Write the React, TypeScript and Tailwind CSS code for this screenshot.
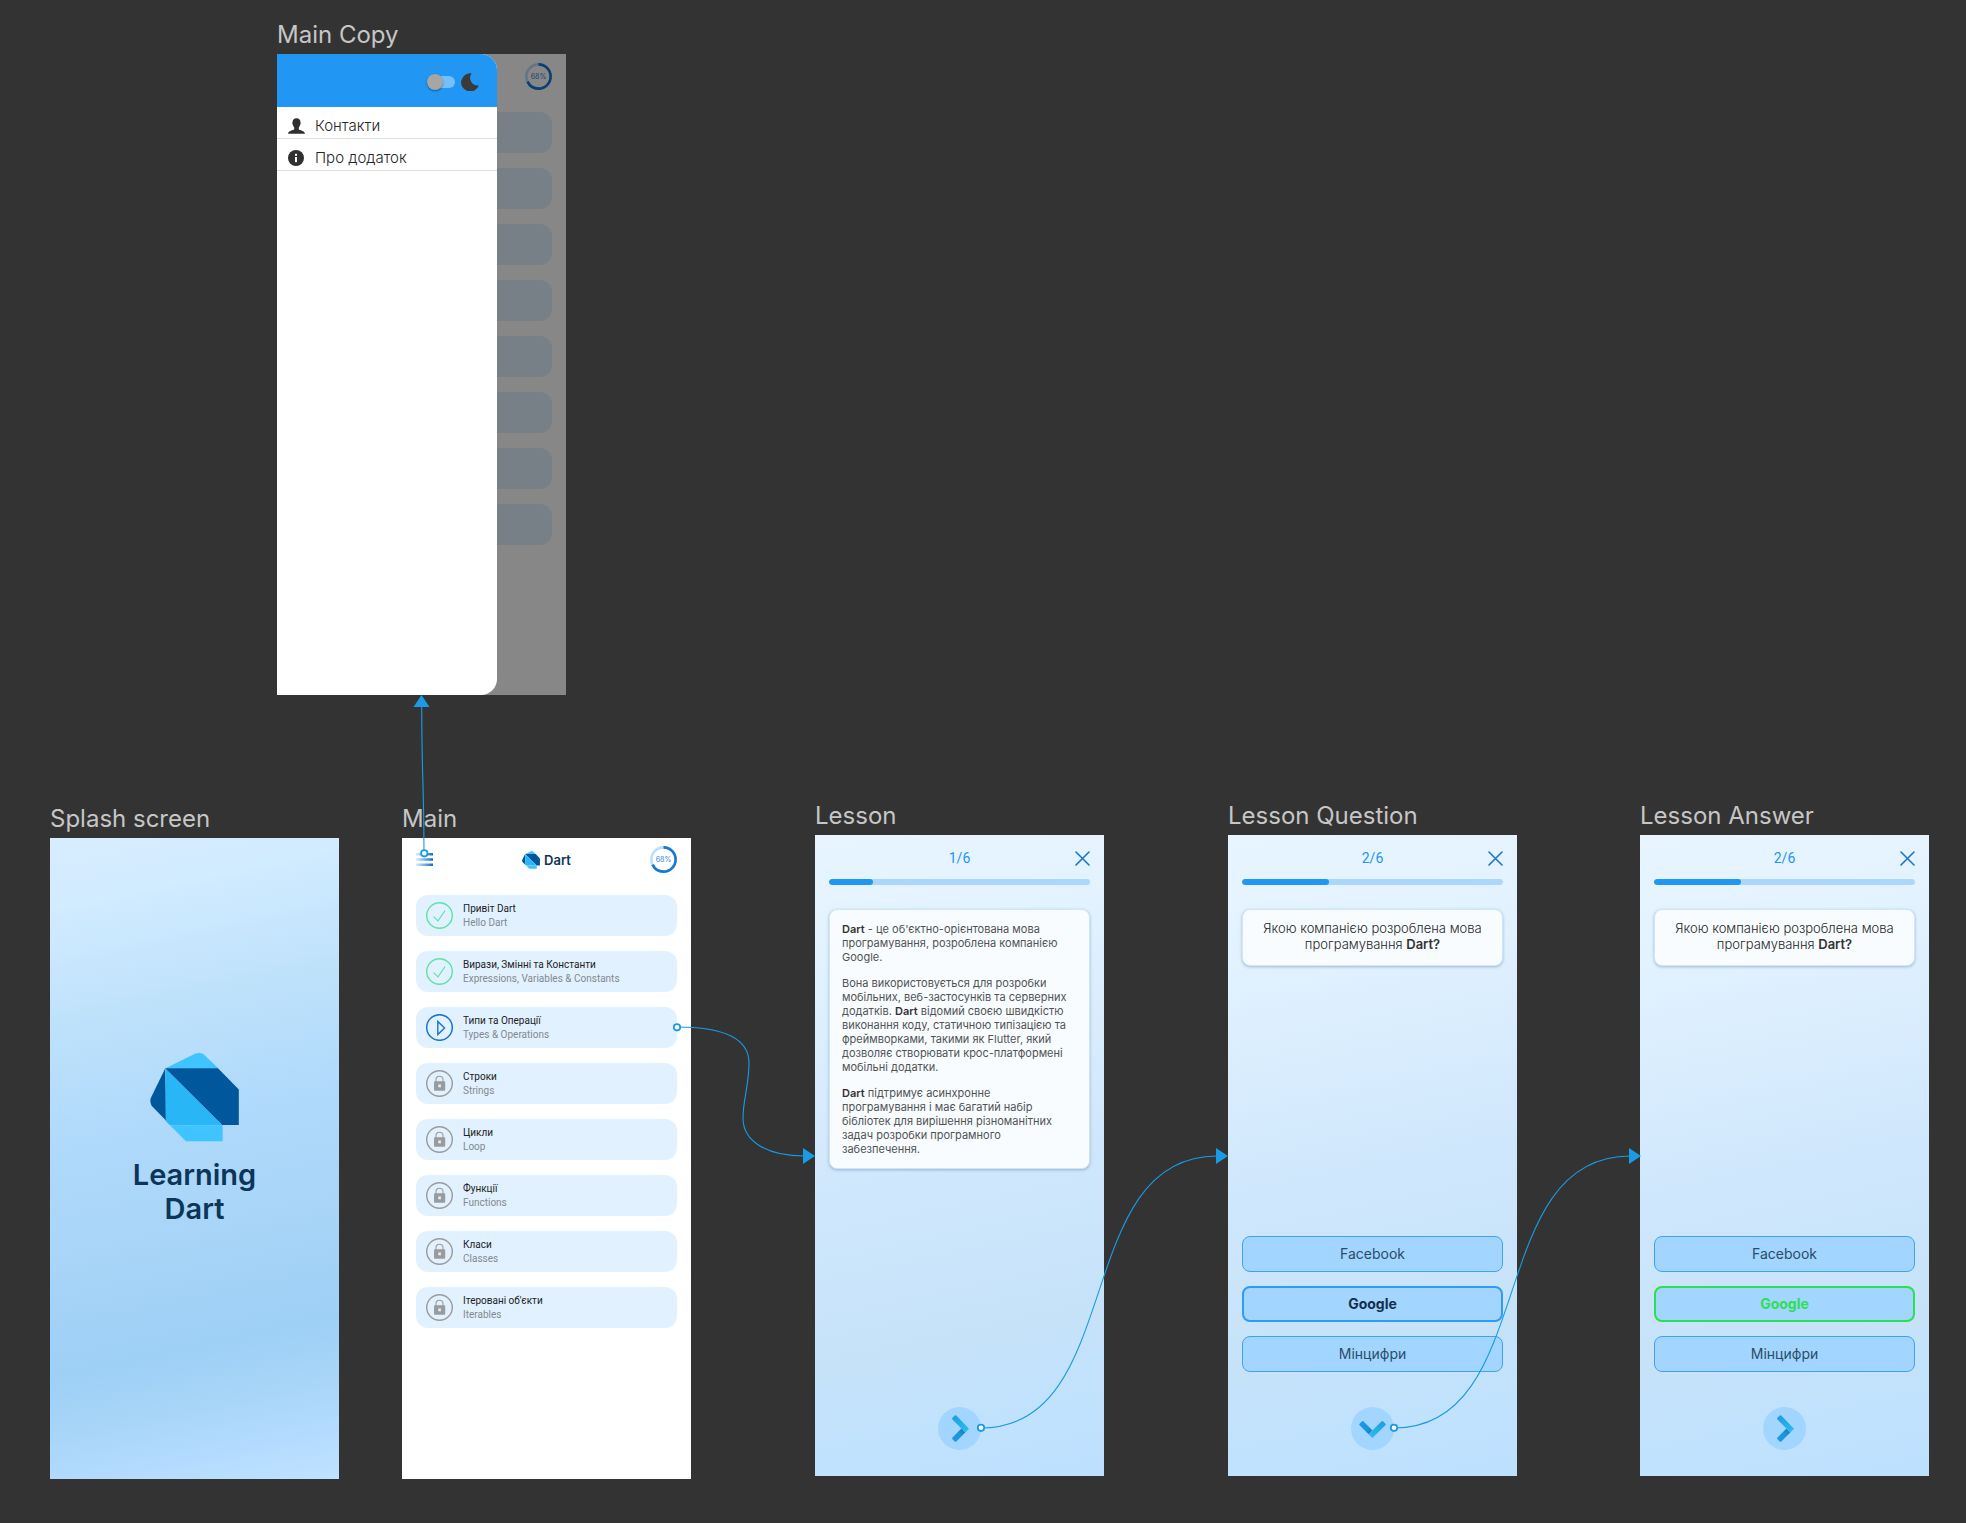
import type { ReactNode } from "react";

type Status = "done" | "current" | "locked";

const lessons: { title: string; subtitle: string; status: Status }[] = [
  { title: "Привіт Dart", subtitle: "Hello Dart", status: "done" },
  { title: "Вирази, Змінні та Константи", subtitle: "Expressions, Variables & Constants", status: "done" },
  { title: "Типи та Операції", subtitle: "Types & Operations", status: "current" },
  { title: "Строки", subtitle: "Strings", status: "locked" },
  { title: "Цикли", subtitle: "Loop", status: "locked" },
  { title: "Функції", subtitle: "Functions", status: "locked" },
  { title: "Класи", subtitle: "Classes", status: "locked" },
  { title: "Ітеровані об'єкти", subtitle: "Iterables", status: "locked" },
];

function DartLogo({ className }: { className: string }) {
  return (
    <svg viewBox="0 0 89 89" className={className} aria-hidden="true">
      <path d="M15 15.5 45 .8Q49-.6 53 .8L68.5 15.5Z" fill="#40c4ff" />
      <path d="M15.3 15.2 .8 45Q-.4 49 1.6 52.8L16 67.5Z" fill="#01579b" />
      <path d="M15 15.3H68L88.8 36.5V72H72Z" fill="#01579b" />
      <path d="M15.7 15.7 72.5 72.2H20L15.7 68Z" fill="#29b6f6" />
      <path d="M20 72.2H72.6V88.3H36Z" fill="#40c4ff" />
    </svg>
  );
}

function ProgressRing() {
  return (
    <svg viewBox="0 0 27 27" className="size-[27px]" role="img" aria-label="68%">
      <circle cx="13.5" cy="13.5" r="12.1" fill="none" stroke="#bbdefb" strokeWidth="2.6" />
      <circle
        cx="13.5"
        cy="13.5"
        r="12.1"
        fill="none"
        stroke="#1976d2"
        strokeWidth="2.6"
        pathLength="100"
        strokeDasharray="68 32"
        transform="rotate(-90 13.5 13.5)"
      />
      <text x="13.5" y="16" textAnchor="middle" fontSize="7" fill="#2f86dc">
        68%
      </text>
    </svg>
  );
}

function StatusIcon({ status }: { status: Status }) {
  return (
    <svg viewBox="0 0 27 27" className="size-[27px] shrink-0" fill="none" aria-hidden="true">
      {status === "done" && (
        <g stroke="#5ce5a0">
          <circle cx="13.5" cy="13.5" r="12.8" strokeWidth="1.4" />
          <path d="M7.6 14.6 12 18.8 19 8.6" strokeWidth="1.1" />
        </g>
      )}
      {status === "current" && (
        <g stroke="#1976d2">
          <circle cx="13.5" cy="13.5" r="12.8" strokeWidth="1.5" />
          <path d="M11.8 7.5V20.5L18.6 14Z" strokeWidth="1.4" />
        </g>
      )}
      {status === "locked" && (
        <g stroke="#9b9b9b">
          <circle cx="13.5" cy="13.5" r="12.8" strokeWidth="1.4" />
          <path d="M10 12V9.8a3.5 3.5 0 0 1 7 0v2.2" strokeWidth="1.1" />
          <path
            d="M9 11.2H18.2Q19.2 11.2 19.2 12.2V19.8Q19.2 20.8 18.2 20.8H9Q8 20.8 8 19.8V12.2Q8 11.2 9 11.2ZM12.3 14.6V17.2H14.9V14.6Z"
            fill="#9b9b9b"
            fillRule="evenodd"
            stroke="none"
          />
        </g>
      )}
    </svg>
  );
}

function Frame({ title, place, screen, children }: { title: string; place: string; screen: string; children: ReactNode }) {
  return (
    <section className={`absolute flex w-[289px] flex-col gap-[3px] ${place}`}>
      <h2 className="text-2xl leading-8 whitespace-nowrap text-[#c6c6c6]">{title}</h2>
      <div className={`flex min-h-[641px] flex-col ${screen}`}>{children}</div>
    </section>
  );
}

function DrawerScreen() {
  return (
    <div className="relative flex flex-1 flex-col px-3.5 pb-4">
      <div className="flex h-11 items-center justify-end">
        <ProgressRing />
      </div>
      <div className="flex flex-col gap-[15px] pt-3.5">
        {lessons.map((l) => (
          <div key={l.title} className="h-[41px] rounded-xl bg-[#e1f1ff]" />
        ))}
      </div>
      <div className="absolute inset-0 bg-black/47" />
      <aside className="absolute inset-y-0 left-0 flex w-[220px] flex-col overflow-hidden rounded-r-2xl bg-white">
        <div className="flex h-[53px] items-center justify-end gap-1.5 bg-[#2196f3] pt-0.5 pr-[18px]">
          <label className="relative flex h-4 w-7 items-center">
            <input type="checkbox" role="switch" aria-label="Темна тема" className="peer absolute inset-0 appearance-none" />
            <span className="ml-auto h-3 w-5 rounded-full bg-[#75c0fb]" />
            <span className="absolute left-0 size-4 rounded-full bg-[#a6a6a6] shadow-[0_1px_2px_rgba(0,0,0,0.4)] peer-checked:left-3" />
          </label>
          <svg viewBox="0 0 18 18" className="size-[18px]" aria-hidden="true">
            <path d="M10.6.4A7.6 7.6 0 0 0 17.8 12.4 9.1 9.1 0 1 1 10.6.4Z" fill="#3a3a3a" />
          </svg>
        </div>
        <nav className="flex flex-col text-[15px] leading-5 font-light text-[#262626]">
          <a href="#contacts" className="flex h-8 items-center gap-2.5 border-b border-[#dedede] pt-1.5 pl-[11px]">
            <svg viewBox="0 0 17 16" className="h-4 w-[17px]" aria-hidden="true">
              <path
                d="M8.5.3C11.2.3 12.6 2 12.5 4.6 12.9 5 12.7 6.3 12.1 6.8 11.9 8 11.4 8.8 10.8 9.4V11.2C11.6 12.4 16.6 12.3 17 15.7H0C.4 12.3 5.4 12.4 6.2 11.2V9.4C5.6 8.8 5.1 8 4.9 6.8 4.3 6.3 4.1 5 4.5 4.6 4.4 2 5.8.3 8.5.3Z"
                fill="#303030"
              />
            </svg>
            Контакти
          </a>
          <a href="#about" className="flex h-8 items-center gap-2.5 border-b border-[#dedede] pt-1.5 pl-[11px]">
            <svg viewBox="0 0 17 16" className="h-4 w-[17px]" aria-hidden="true">
              <circle cx="8" cy="8" r="8" fill="#303030" />
              <rect x="7" y="3.8" width="2" height="2" fill="#fff" />
              <rect x="7" y="7" width="2" height="5.2" fill="#fff" />
            </svg>
            Про додаток
          </a>
        </nav>
      </aside>
    </div>
  );
}

function MainScreen() {
  return (
    <>
      <header className="grid h-[43px] grid-cols-[1fr_auto_1fr] items-center px-3.5">
        <button type="button" aria-label="Меню" className="justify-self-start">
          <svg viewBox="0 0 17 13" className="h-[13px] w-[17px]" aria-hidden="true">
            <defs>
              <linearGradient id="menuLines" gradientUnits="userSpaceOnUse" x1="0" y1="0" x2="17" y2="0">
                <stop offset="0" stopColor="#dceefd" />
                <stop offset="0.7" stopColor="#4a96e3" />
                <stop offset="1" stopColor="#1565c0" />
              </linearGradient>
            </defs>
            <path d="M0 0H17V2.6H0ZM0 5.2H17V7.8H0ZM0 10.4H17V13H0Z" fill="url(#menuLines)" />
          </svg>
        </button>
        <div className="flex items-center gap-1 text-[13px] leading-4 font-semibold text-[#0d3559]">
          <DartLogo className="size-[18px]" />
          Dart
        </div>
        <div className="justify-self-end">
          <ProgressRing />
        </div>
      </header>
      <ul className="flex flex-col gap-[15px] px-3.5 pt-3.5">
        {lessons.map((l) => (
          <li key={l.title}>
            <button
              type="button"
              className="flex h-[41px] w-full items-center gap-2.5 rounded-xl bg-[#e1f1ff] px-2.5 text-left font-['Roboto',sans-serif] text-[10px] leading-[14px]"
            >
              <StatusIcon status={l.status} />
              <span className="flex flex-col">
                <span className="text-[#222222]">{l.title}</span>
                <span className="text-[#84898d]">{l.subtitle}</span>
              </span>
            </button>
          </li>
        ))}
      </ul>
    </>
  );
}

function Chevron({ down }: { down?: boolean }) {
  return (
    <span className={`flex size-full items-center justify-center pl-0.5 ${down ? "rotate-90" : ""}`}>
      <svg viewBox="0 0 17 27" className="h-[27px] w-[17px]" aria-hidden="true">
        <defs>
          <linearGradient id="armTop" x1="0" y1="0" x2="1" y2="1">
            <stop offset="0" stopColor="#1c9ce0" />
            <stop offset="1" stopColor="#2fbdf2" />
          </linearGradient>
          <linearGradient id="armBottom" x1="0" y1="1" x2="1" y2="0">
            <stop offset="0" stopColor="#1c9ce5" />
            <stop offset="0.6" stopColor="#1a94dc" />
            <stop offset="1" stopColor="#1475bd" />
          </linearGradient>
        </defs>
        <path d="M9.4 13.5 13.3 17.4 4.3 26.4Q3.5 27.2 2.7 26.4L.5 24.2Q-.3 23.3.5 22.4Z" fill="url(#armBottom)" />
        <path d="M.5 4.6Q-.3 3.7.5 2.8L2.7.6Q3.5-.2 4.3.6L17 13.7 13.3 17.4Z" fill="url(#armTop)" />
      </svg>
    </span>
  );
}

function LessonShell({ step, next, children }: { step: number; next: "next" | "check"; children: ReactNode }) {
  return (
    <div className="flex flex-1 flex-col px-3.5 pb-[26px]">
      <header className="grid h-11 grid-cols-[1fr_auto_1fr] items-center pt-0.5">
        <span className="col-start-2 font-['Roboto',sans-serif] text-sm leading-5 text-[#2196f3]">{step}/6</span>
        <button type="button" aria-label="Закрити" className="justify-self-end">
          <svg viewBox="0 0 15 15" className="size-[15px]" aria-hidden="true">
            <path d="M1 1 14 14M14 1 1 14" stroke="#1976d2" strokeWidth="1.6" strokeLinecap="round" />
          </svg>
        </button>
      </header>
      <div
        role="progressbar"
        aria-label="Прогрес уроку"
        aria-valuemin={0}
        aria-valuemax={6}
        aria-valuenow={step}
        className="h-1.5 overflow-hidden rounded-sm bg-[#abd7fa]"
      >
        <div className="h-full rounded-sm bg-[#2196f3]" style={{ width: `${(step / 6) * 100}%` }} />
      </div>
      {children}
      <button
        type="button"
        aria-label={next === "check" ? "Перевірити" : "Далі"}
        className="size-[43px] self-center rounded-full bg-[#a2d5ff]"
      >
        <Chevron down={next === "check"} />
      </button>
    </div>
  );
}

const card =
  "mt-6 rounded-lg border border-[#cde6fb] bg-[#f8fcff] px-3 shadow-[0_1px_3px_rgba(40,80,120,0.35)]";

function LessonScreen() {
  return (
    <LessonShell step={1} next="next">
      <article className={`${card} mb-auto flex flex-col gap-3 py-3 text-[11px] leading-[14px] text-[#505356]`}>
        <p>
          <b className="font-semibold text-[#333333]">Dart</b> - це об'єктно-орієнтована мова програмування, розроблена
          компанією Google.
        </p>
        <p>
          Вона використовується для розробки мобільних, веб-застосунків та серверних додатків.{" "}
          <b className="font-semibold text-[#333333]">Dart</b> відомий своєю швидкістю виконання коду, статичною
          типізацією та фреймворками, такими як Flutter, який дозволяє створювати крос-платформені мобільні додатки.
        </p>
        <p>
          <b className="font-semibold text-[#333333]">Dart</b> підтримує асинхронне програмування і має багатий набір
          бібліотек для вирішення різноманітних задач розробки програмного забезпечення.
        </p>
      </article>
    </LessonShell>
  );
}

function QuestionScreen({ answered }: { answered?: boolean }) {
  const plain = "h-9 rounded-lg border border-[#3fa2f5] bg-[#a2d5ff] text-sm leading-5 text-[#2b4c69]";
  const picked = answered
    ? "h-9 rounded-lg border-2 border-[#2be052] bg-[#a2d5ff] text-sm leading-5 font-bold text-[#2be052]"
    : "h-9 rounded-lg border-2 border-[#2f9bf4] bg-[#a2d5ff] text-sm leading-5 font-bold text-[#12304a]";
  return (
    <LessonShell step={2} next={answered ? "next" : "check"}>
      <p className={`${card} pt-2.5 pb-[13px] text-center text-[13px] leading-4 font-light text-[#262626]`}>
        Якою компанією розроблена мова програмування <b className="font-semibold text-[#333333]">Dart?</b>
      </p>
      <div className="mt-auto mb-[35px] flex flex-col gap-3.5">
        <button type="button" className={plain}>Facebook</button>
        <button type="button" className={picked}>Google</button>
        <button type="button" className={plain}>Мінцифри</button>
      </div>
    </LessonShell>
  );
}

function Connectors() {
  return (
    <svg className="pointer-events-none absolute inset-0 size-full" aria-hidden="true">
      <g fill="none" stroke="#1a9be5" strokeWidth="1.1">
        <path d="M424 853C424 780 421.7 780 421.7 706" />
        <path d="M677 1027C722 1027 749 1037 749 1063C749 1085 743 1100 743 1118C743 1142 768 1156 804 1156" />
        <path d="M981 1428C1126 1428 1071 1156 1217 1156" />
        <path d="M1394 1428C1539 1428 1484 1156 1630 1156" />
      </g>
      <g fill="#1a9be5">
        <path d="M421.5 695 429.5 707H413.5Z" />
        <path d="M815 1156 803 1148V1164Z" />
        <path d="M1228 1156 1216 1148V1164Z" />
        <path d="M1641 1156 1629 1148V1164Z" />
      </g>
      <g fill="#fff" stroke="#1a9be5" strokeWidth="1.8">
        <circle cx="424.3" cy="853.3" r="3.2" />
        <circle cx="677" cy="1027.3" r="3.2" />
        <circle cx="981" cy="1427.8" r="3.2" />
        <circle cx="1394" cy="1427.8" r="3.2" />
      </g>
    </svg>
  );
}

const lessonSky = "bg-[linear-gradient(168deg,#e8f5ff_0%,#e2f2ff_18%,#cfe7fc_52%,#c5e2f9_78%,#c0e2fe_90%,#bde0ff_100%)]";

export default function App() {
  return (
    <main className="relative min-h-screen overflow-hidden bg-[#333333] font-['Inter',sans-serif]">
      <Frame title="Main Copy" place="left-[277px] top-[19px]" screen="bg-white">
        <DrawerScreen />
      </Frame>
      <Frame
        title="Splash screen"
        place="left-[50px] top-[803px]"
        screen="items-center gap-4 pt-[215px] bg-[linear-gradient(168deg,#d8ecff_0%,#d1ebff_10%,#bfe2fb_26%,#b1dafb_42%,#a8d5f8_60%,#9ecff5_77%,#a8d6f9_86%,#b1d9fe_91%,#bfe2ff_100%)]"
      >
        <DartLogo className="size-[89px]" />
        <h1 className="w-36 text-center text-[29px] leading-[34px] font-semibold text-[#0d3559]">Learning Dart</h1>
      </Frame>
      <Frame title="Main" place="left-[402px] top-[803px]" screen="bg-white">
        <MainScreen />
      </Frame>
      <Frame title="Lesson" place="left-[815px] top-[800px]" screen={lessonSky}>
        <LessonScreen />
      </Frame>
      <Frame title="Lesson Question" place="left-[1228px] top-[800px]" screen={lessonSky}>
        <QuestionScreen />
      </Frame>
      <Frame title="Lesson Answer" place="left-[1640px] top-[800px]" screen={lessonSky}>
        <QuestionScreen answered />
      </Frame>
      <Connectors />
    </main>
  );
}
